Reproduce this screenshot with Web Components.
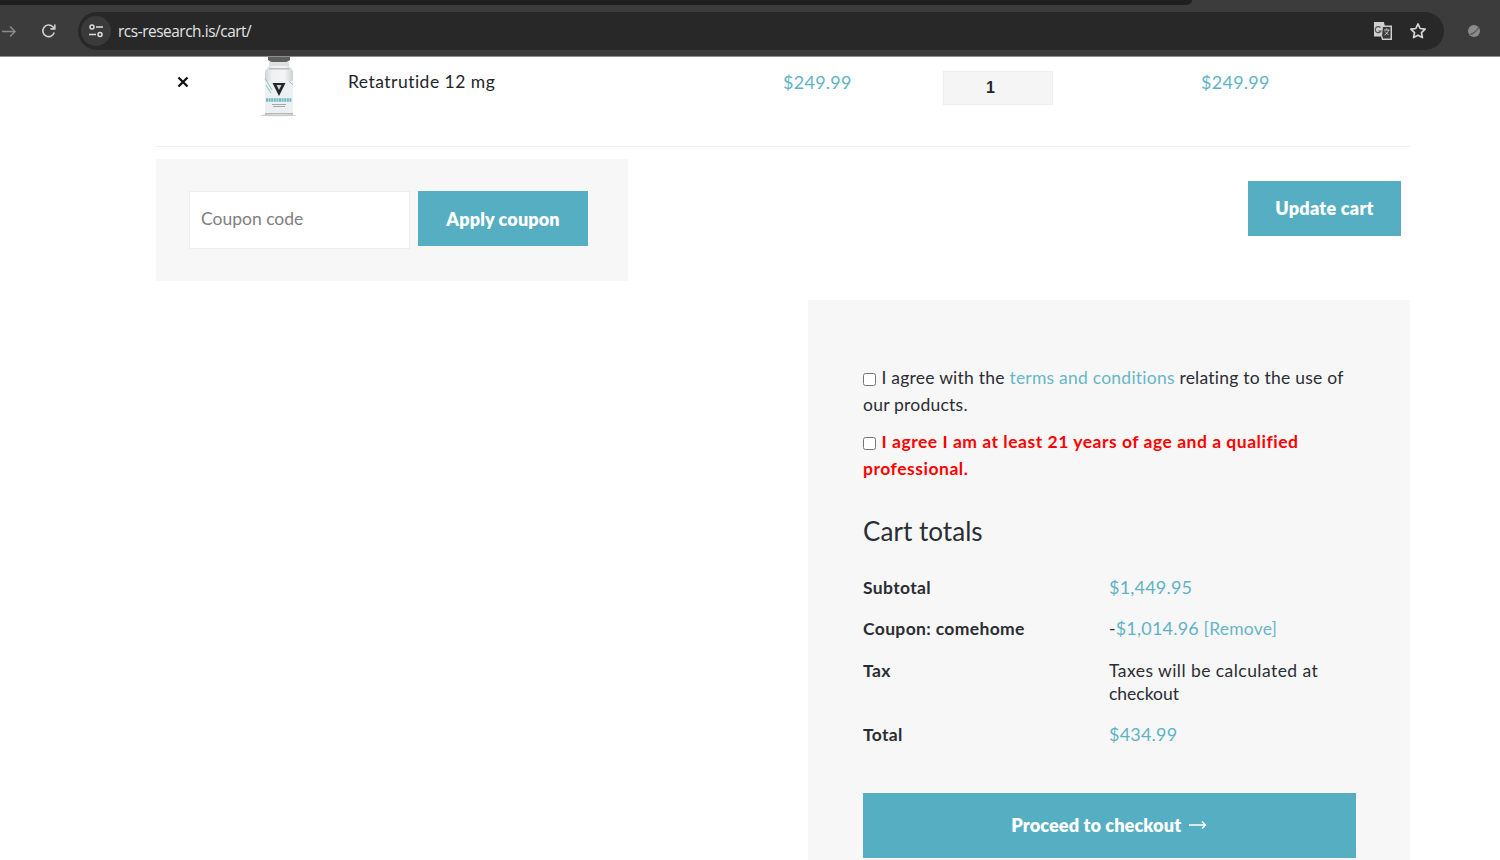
<!DOCTYPE html>
<html lang="en"><head><meta charset="utf-8"><title>Cart</title>
<style>
html,body{margin:0;padding:0;background:#fff;height:860px;overflow:hidden}
body{font-family:"Lato","Open Sans",sans-serif;font-size:17px;color:#2a2d33}
</style></head><body>
<browser-bar url="rcs-research.is/cart/"></browser-bar>
<cart-page>
  <cart-row slot="row" name="Retatrutide 12 mg" price="$249.99" qty="1" subtotal="$249.99"></cart-row>
  <coupon-actions slot="actions"></coupon-actions>
  <cart-totals slot="totals"></cart-totals>
</cart-page>
<script>
function def(name, html){
  customElements.define(name, class extends HTMLElement{
    connectedCallback(){
      if(this.shadowRoot) return;
      const r=this.attachShadow({mode:'open'});
      r.innerHTML=typeof html==='function'?html(this):html;
    }
  });
}
def('browser-bar', el=>`<style>
:host{display:flex;flex-direction:column;height:57px;background:#3c3c3c;box-sizing:border-box;border-bottom:1px solid #8e8e8e}
.tabs{height:12px;display:flex}
.tab{width:1192px;height:5px;background:#1f1f1f;border-radius:0 0 12px 0}
.row{display:flex;align-items:center;height:38px}
.back{width:18px;display:flex;justify-content:flex-start}
.reload{margin-left:22px;width:18px;height:18px;display:block}
.omni{margin-left:20px;width:1366px;height:38px;box-sizing:border-box;background:#282828;border-radius:19px;display:flex;align-items:center;padding:0 17px 0 3px}
.tune{width:30px;height:30px;border-radius:50%;background:#3a3a3a;display:flex;align-items:center;justify-content:center;flex:none}
.url{margin-left:7px;color:#e4e4e4;font:15.4px "Open Sans",sans-serif;letter-spacing:-.45px;flex:1}
.prof{margin-left:23px;display:block}
.ic{display:block;flex:none}
</style>
<div class="tabs"><div class="tab"></div></div>
<div class="row">
  <div class="back"><svg class="ic" width="18" height="18" viewBox="0 0 18 18" fill="none" stroke="#8a8a8a" stroke-width="1.5"><path d="M2 9.500H15M10 4.500l5 5-5 5"/></svg></div>
  <svg class="reload" viewBox="0 0 18 18" fill="none" stroke="#cfcfcf" stroke-width="1.6"><path d="M14.200 10.500A5.800 5.800 0 1 1 12.800 4.800L14.500 6.500"/><path d="M14.800 2.500v4.400h-4.400"/></svg>
  <div class="omni">
    <div class="tune"><svg width="18" height="18" viewBox="0 0 18 18" fill="none" stroke="#dedede" stroke-width="1.500"><circle cx="5" cy="5" r="2"/><path d="M9 5h7M2 12.500h7"/><circle cx="13" cy="12.500" r="2"/></svg></div>
    <span class="url">${el.getAttribute('url')}</span>
    <svg class="ic" width="20" height="20" viewBox="0 0 20 20" style="margin-right:16px"><path d="M1 1h9.800l1 3.500H19V19H9l-1-3.500H1z" fill="#cfcfcf"/><path d="M9.500 5.500h8.500v12.500H9.700L8.600 14.500z" fill="#3a3a3a" stroke="#cfcfcf" stroke-width=".9"/><path d="M7.500 6.600A3 3 0 1 0 8 10H5.500" fill="none" stroke="#555" stroke-width="1.200"/><path d="M11 9h5.500M13.700 7.500v1.500M15.500 9c-.5 2.300-2 4-4 5M12 10.500l3.500 3.500" stroke="#cfcfcf" stroke-width=".9" fill="none"/></svg>
    <svg class="ic" width="18" height="18" viewBox="0 0 18 18" fill="none" stroke="#d6d6d6" stroke-width="1.700"><path d="M9 1.900l2.150 4.600 5 .65-3.650 3.450.95 5L9 13.150 4.550 15.600l.95-5L1.850 7.150l5-.65z" stroke-linejoin="round"/></svg>
  </div>
  <svg class="prof" width="14" height="14" viewBox="0 0 14 14"><circle cx="7" cy="7" r="6" fill="#8c8c8c"/><path d="M3 10.500C6 10 10 7 11.500 3.500" stroke="#5c5c5c" stroke-width="1.400" fill="none"/></svg>
</div>`);

def('cart-page', `<style>
:host{display:block;padding:0 90px 0 156px;box-sizing:border-box;width:1500px}
.tot{display:flex;justify-content:flex-end;margin-top:19px}
</style>
<slot name="row"></slot>
<div><slot name="actions"></slot></div>
<div class="tot"><slot name="totals"></slot></div>`);

def('vial-image', `<style>:host{display:block;width:48px;height:60px}svg{display:block}</style>
<svg width="48" height="60" viewBox="0 0 48 60">
<defs><filter id="b" x="-20%" y="-20%" width="140%" height="140%"><feGaussianBlur stdDeviation=".6"/></filter>
<linearGradient id="g" x1="0" x2="1" y1="0" y2="0"><stop offset="0" stop-color="#ced4d4"/><stop offset=".25" stop-color="#eef1f1"/><stop offset=".7" stop-color="#f4f6f6"/><stop offset="1" stop-color="#cbd1d1"/></linearGradient></defs>
<g filter="url(#b)">
<ellipse cx="20" cy="58.300" rx="18" ry="1" fill="#cfcfcf"/>
<path d="M10 0h22v3q-3 3-11 3t-11-3z" fill="#5e5e5e"/>
<path d="M11 5h20v4H11z" fill="#dde1e1"/>
<path d="M11 9h20l4 5v44H7V14z" fill="url(#g)"/>
<path d="M11 11h20v1.500H11z" fill="#b8bdbd"/>
<path d="M7 24h28v32H7z" fill="#ecf0f0"/>
<path d="M7 21l7 12M8 28l5 8M31 24l4 4" stroke="#86c3cd" stroke-width="1" fill="none"/>
<path d="M14.500 26h13l-6.500 13z" fill="#22262a"/>
<path d="M18.500 28h5l-2.500 5z" fill="#cfd4d4"/>
<path d="M8 43h26" stroke="#72b6c2" stroke-width="3.500" stroke-dasharray="2 .6" fill="none"/>
<path d="M14 47h14v1H14zM15 49h12v1H15z" fill="#a2a8aa"/>
<path d="M7 56h28v1.500H7z" fill="#b5baba"/>
</g></svg>`);

def('cart-row', el=>`<style>
:host{display:grid;grid-template-columns:75px 102px 450px 160px 258px 1fr;height:89px;border-bottom:1px solid #efefef;box-sizing:content-box;color:#22252b}
.x{padding:14px 0 0 20px}
.x svg{display:block;margin-top:4px}
.th{padding-left:27px;overflow:hidden;width:75px;box-sizing:border-box}
.n{padding-top:13px;padding-left:15px;font:17.500px/24px "Lato",sans-serif;letter-spacing:.48px;white-space:nowrap}
.p{padding-top:12px;font:18px/27px "Lato",sans-serif;color:#5fb3c5;letter-spacing:.27px}
.q{padding-top:14px}
.q div{width:110px;height:34px;box-sizing:border-box;background:#f5f5f5;border:1px solid #eee;font:700 16px/32px "Liberation Sans",sans-serif;color:#22252b;padding-left:42px}
</style>
<div class="x"><svg width="14" height="14" viewBox="0 0 14 14"><path d="M2.500 2.500l9 9M11.500 2.500l-9 9" stroke="#111" stroke-width="2.300"/></svg></div>
<div class="th"><vial-image></vial-image></div>
<div class="n">${el.getAttribute('name')}</div>
<div class="p">${el.getAttribute('price')}</div>
<div class="q"><div>${el.getAttribute('qty')}</div></div>
<div class="p">${el.getAttribute('subtotal')}</div>`);

def('teal-button', `<style>
:host{display:inline-flex;align-items:center;justify-content:center;background:#55aec1;color:#fff;font:800 18px "Lato",sans-serif;letter-spacing:.27px;box-sizing:border-box;white-space:nowrap}
</style><slot></slot>`);

def('coupon-actions', `<style>
:host{display:flex;justify-content:space-between;align-items:flex-start;margin-top:12px;padding-right:9px;width:1254px;box-sizing:border-box}
.box{width:472px;height:122px;box-sizing:border-box;background:#f7f7f7;padding:32px 0 0 33px;display:flex;gap:8px;align-items:flex-start}
.in{width:221px;height:58px;box-sizing:border-box;background:#fff;border:1px solid #eee;padding:0 11px;font:17.500px/53px "Lato",sans-serif;color:#80807f}
.a{width:170px;height:55px;letter-spacing:.12px}
.u{width:153px;height:55px;margin-top:22px;padding-bottom:2px}
</style>
<div class="box"><div class="in">Coupon code</div><teal-button class="a">Apply coupon</teal-button></div>
<teal-button class="u">Update cart</teal-button>`);

def('cart-totals', `<style>
:host{display:block;width:602px;height:600px;box-sizing:border-box;background:#f7f7f7;padding:65px 55px 0;color:#2a2d33}
p{margin:0 0 11px;font:17.500px/26.500px "Lato",sans-serif;letter-spacing:.23px}
.cb{display:inline-block;width:13px;height:13px;box-sizing:border-box;border:1.300px solid #767676;border-radius:2.500px;background:#fff;margin-right:5.500px;vertical-align:-2px}
a{color:#68b6c7}
.red{color:#f00;font-weight:700;margin-bottom:0;letter-spacing:.52px}
h2{margin:31px 0 0;font:400 26px/36px "Lato",sans-serif;letter-spacing:.05px}
.t{display:grid;grid-template-columns:246px 1fr;margin-top:27px;font:17.500px/23.500px "Lato",sans-serif;letter-spacing:.2px}
.t>*{padding:0 0 17.750px}
.t b{font-weight:700;letter-spacing:.35px}
.m{color:#5fb3c5;font-size:18px}
.tx{letter-spacing:.45px}
.ck{letter-spacing:0}
.b{display:flex;width:492.500px;height:65px;margin-top:28px;font-size:18.200px;letter-spacing:.05px}
svg{margin-left:8px}
</style>
<p><span class="cb"></span><span>I agree with the </span><a>terms and conditions</a><span> relating to the use of</span><br><span>our products.</span></p>
<p class="red"><span class="cb"></span><span>I agree I am at least 21 years of age and a qualified</span><br><span>professional.</span></p>
<h2>Cart totals</h2>
<div class="t">
<b>Subtotal</b><span class="m">$1,449.95</span>
<b>Coupon: comehome</b><span>-<span class="m">$1,014.96</span> <a>[Remove]</a></span>
<b>Tax</b><span><span class="tx">Taxes will be calculated at</span><br><span class="ck">checkout</span></span>
<b>Total</b><span class="m">$434.99</span>
</div>
<teal-button class="b">Proceed to checkout<svg width="18" height="10" viewBox="0 0 18 10" fill="none" stroke="#fff" stroke-width="1.300"><path d="M0 5h16.500M13 1.500l3.500 3.500-3.500 3.500"/></svg></teal-button>`);
</script>
</body></html>
